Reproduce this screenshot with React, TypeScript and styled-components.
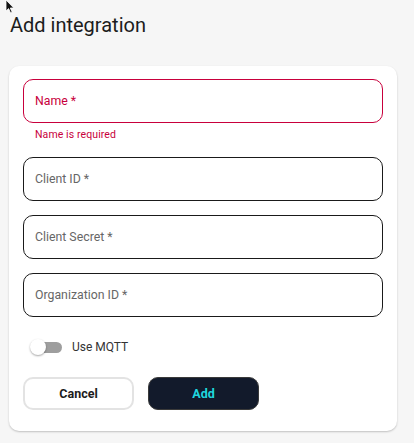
import React from 'react';
import styled, {createGlobalStyle} from 'styled-components';

const GlobalStyle = createGlobalStyle`
  body {
    margin: 0;
    background: #f6f6f6;
    font-family: Roboto, "Liberation Sans", sans-serif;
  }
`

export default function App() {
    return (
        <Page>
            <GlobalStyle/>
            <Cursor width="10" height="14" viewBox="0 0 10 14">
                <path d="M1 0 L1 11 L3.6 8.6 L5.6 13 L7.2 12.3 L5.3 8 L8.8 8 Z" fill="#111" stroke="#fff" strokeWidth="0.8"/>
            </Cursor>
            <Title>Add integration</Title>
            <Card>
                <Fields>
                    <FieldGroup>
                        <Input $error placeholder="Name *"/>
                        <Helper>Name is required</Helper>
                    </FieldGroup>
                    <Input placeholder="Client ID *"/>
                    <Input placeholder="Client Secret *"/>
                    <Input placeholder="Organization ID *"/>
                </Fields>
                <ToggleRow>
                    <Switch>
                        <Track/>
                        <Thumb/>
                    </Switch>
                    <ToggleLabel>Use MQTT</ToggleLabel>
                </ToggleRow>
                <Actions>
                    <Button>Cancel</Button>
                    <Button $primary>Add</Button>
                </Actions>
            </Card>
        </Page>
    );
}

const Page = styled.div`
  position: relative;
  padding: 13px 17px 12px 9px;
`
const Cursor = styled.svg`
  position: absolute;
  top: 0;
  left: 5px;
`
const Title = styled.h1`
  margin: 0 0 29px 1px;
  font-size: 20px;
  line-height: 24px;
  font-weight: 400;
  color: #1c1c1c;
`
const Card = styled.div`
  background: #fff;
  border-radius: 10px;
  box-shadow: 0 1px 2px rgba(0, 0, 0, 0.22);
  padding: 13px 14px 21px;
`
const Fields = styled.div`
  display: flex;
  flex-direction: column;
  gap: 14px;
`
const FieldGroup = styled.div`
  display: flex;
  flex-direction: column;
`
const Input = styled.input<{ $error?: boolean }>`
  box-sizing: border-box;
  width: 100%;
  height: 44px;
  padding: 0 11px;
  border: 1.5px solid ${p => p.$error ? '#c8003c' : '#1a1a1a'};
  border-radius: 10px;
  background: #fff;
  font-family: Roboto, "Liberation Sans", sans-serif;
  font-size: 12.3px;
  outline: none;

  &::placeholder {
    color: ${p => p.$error ? '#c8003c' : '#666'};
  }
`
const Helper = styled.span`
  margin: 4px 0 0 12px;
  font-size: 10.5px;
  line-height: 16px;
  letter-spacing: 0.1px;
  color: #c8003c;
`
const ToggleRow = styled.div`
  display: flex;
  align-items: center;
  gap: 10px;
  height: 32px;
  margin-top: 14px;
  padding-left: 7px;
`
const Switch = styled.div`
  position: relative;
  width: 32px;
  height: 16px;
`
const Track = styled.div`
  position: absolute;
  top: 3px;
  left: 3px;
  width: 29px;
  height: 11px;
  border-radius: 6px;
  background: #9e9e9e;
`
const Thumb = styled.div`
  position: absolute;
  top: 0;
  left: 0;
  width: 16px;
  height: 16px;
  border-radius: 50%;
  background: #fff;
  box-shadow: 0 1px 2px rgba(0, 0, 0, 0.35);
`
const ToggleLabel = styled.span`
  font-size: 12px;
  color: #333;
`
const Actions = styled.div`
  display: flex;
  gap: 14px;
  margin-top: 14px;
`
const Button = styled.button<{ $primary?: boolean }>`
  box-sizing: border-box;
  width: 111px;
  height: 33px;
  border-radius: 10px;
  border: ${p => p.$primary ? '1px solid #3a3a3a' : '2px solid #e3e3e3'};
  background: ${p => p.$primary ? '#121a2b' : '#fff'};
  color: ${p => p.$primary ? '#1fd6df' : '#1c1c1c'};
  font-family: Roboto, "Liberation Sans", sans-serif;
  font-size: 12.5px;
  font-weight: 700;
  cursor: pointer;
`
